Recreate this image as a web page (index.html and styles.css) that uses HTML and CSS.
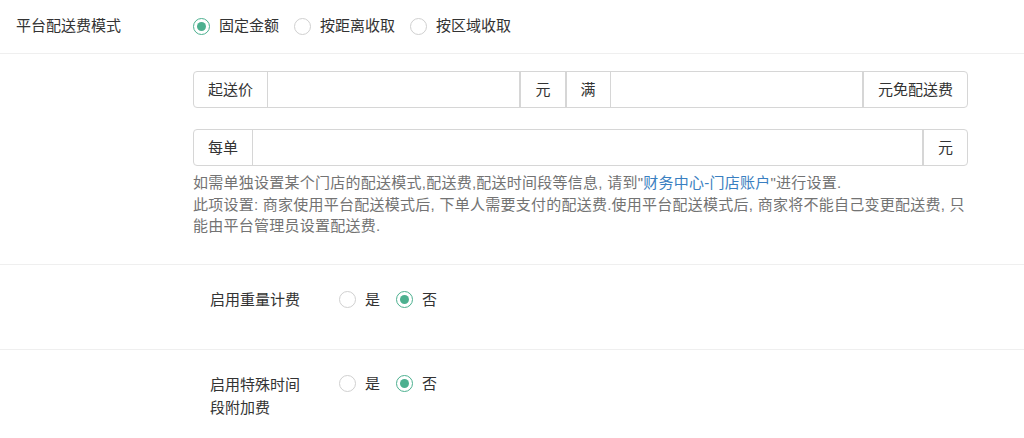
FILE: index.html
```html
<!DOCTYPE html>
<html lang="zh-CN">
<head>
    <meta charset="UTF-8">
    <meta name="viewport" content="width=device-width, initial-scale=1.0">
    <title>配送费设置</title>
    <link rel="stylesheet" href="styles.css">
</head>
<body>

<div class="form-wrap">

    <!-- 平台配送费模式 -->
    <div class="form-row row-mode">
        <div class="row-label">平台配送费模式</div>
        <div class="row-controls">
            <label class="radio checked"><span class="radio-circle"></span>固定金额</label>
            <label class="radio"><span class="radio-circle"></span>按距离收取</label>
            <label class="radio"><span class="radio-circle"></span>按区域收取</label>
        </div>
    </div>

    <!-- 固定金额 -->
    <div class="form-row row-fixed">
        <div class="fixed-body">
            <div class="input-group">
                <span class="addon">起送价</span>
                <span class="field"></span>
                <span class="addon">元</span>
                <span class="addon">满</span>
                <span class="field"></span>
                <span class="addon">元免配送费</span>
            </div>
            <div class="input-group">
                <span class="addon">每单</span>
                <span class="field"></span>
                <span class="addon">元</span>
            </div>
            <p class="help-text">
                如需单独设置某个门店的配送模式,配送费,配送时间段等信息, 请到"<a href="#" class="help-link">财务中心-门店账户</a>"进行设置.<br>
                此项设置: 商家使用平台配送模式后, 下单人需要支付的配送费.使用平台配送模式后, 商家将不能自己变更配送费, 只能由平台管理员设置配送费.
            </p>
        </div>
    </div>

    <!-- 启用重量计费 -->
    <div class="form-row row-option">
        <div class="option-label">启用重量计费</div>
        <div class="option-controls">
            <label class="radio"><span class="radio-circle"></span>是</label>
            <label class="radio checked"><span class="radio-circle"></span>否</label>
        </div>
    </div>

    <!-- 启用特殊时间段附加费 -->
    <div class="form-row row-option row-last">
        <div class="option-label">启用特殊时间段附加费</div>
        <div class="option-controls">
            <label class="radio"><span class="radio-circle"></span>是</label>
            <label class="radio checked"><span class="radio-circle"></span>否</label>
        </div>
    </div>

</div>

</body>
</html>
```

FILE: styles.css
```css
body {
    font-family: 'Liberation Sans', 'Noto Sans CJK SC', sans-serif;
    font-size: 15px;
    color: #333;
    background-color: white;
    margin: 0;
    padding: 0;
}

.form-row {
    display: flex;
    border-bottom: 1px solid #efefef;
}

.row-last {
    border-bottom: none;
}

/* Top row: mode selection */
.row-mode {
    padding: 16px 0 17px 16px;
    line-height: 20px;
}

.row-label {
    width: 177px;
}

.row-controls {
    display: flex;
    align-items: center;
}

/* Radio buttons */
.radio {
    display: inline-flex;
    align-items: center;
    gap: 9px;
    margin-right: 15px;
    cursor: pointer;
}

.radio-circle {
    width: 15px;
    height: 15px;
    border: 1px solid #d0d0d0;
    border-radius: 50%;
    display: flex;
    align-items: center;
    justify-content: center;
    background: white;
}

.radio.checked .radio-circle {
    border-color: #4cb08f;
}

.radio.checked .radio-circle::after {
    content: '';
    width: 9px;
    height: 9px;
    border-radius: 50%;
    background-color: #4cb08f;
}

/* Fixed amount block */
.row-fixed {
    padding: 17px 56px 27px 193px;
}

.fixed-body {
    flex: 1;
}

.input-group {
    display: flex;
    height: 37px;
    border: 1px solid #d6d6d6;
    border-radius: 4px;
    box-sizing: border-box;
    margin-bottom: 21px;
}

.input-group:last-of-type {
    margin-bottom: 0;
}

.addon {
    padding: 0 14px;
    line-height: 35px;
    white-space: nowrap;
    border-right: 1px solid #d6d6d6;
}

.addon:last-child {
    border-right: none;
}

.field {
    flex: 1;
    border-right: 2px solid #d6d6d6;
}

.input-group .addon + .addon {
    border-left: 1px solid #d6d6d6;
}

.help-text {
    margin: 6px 0 0 0;
    color: #737373;
    line-height: 21.5px;
    letter-spacing: 0.25px;
}

.help-link {
    color: #3a7fc1;
    text-decoration: none;
}

/* Yes / no option rows */
.row-option {
    padding: 24px 0 0 210px;
    line-height: 22px;
}

.row-option:not(.row-last) {
    height: 60px;
}

.row-last {
    height: 64px;
    padding-top: 23px;
    line-height: 23px;
}

.option-label {
    width: 100px;
}

.option-controls {
    display: flex;
    align-items: flex-start;
    margin-left: 29px;
    padding-top: 2px;
}

.option-controls .radio {
    margin-right: 16px;
    height: 18px;
}
```
